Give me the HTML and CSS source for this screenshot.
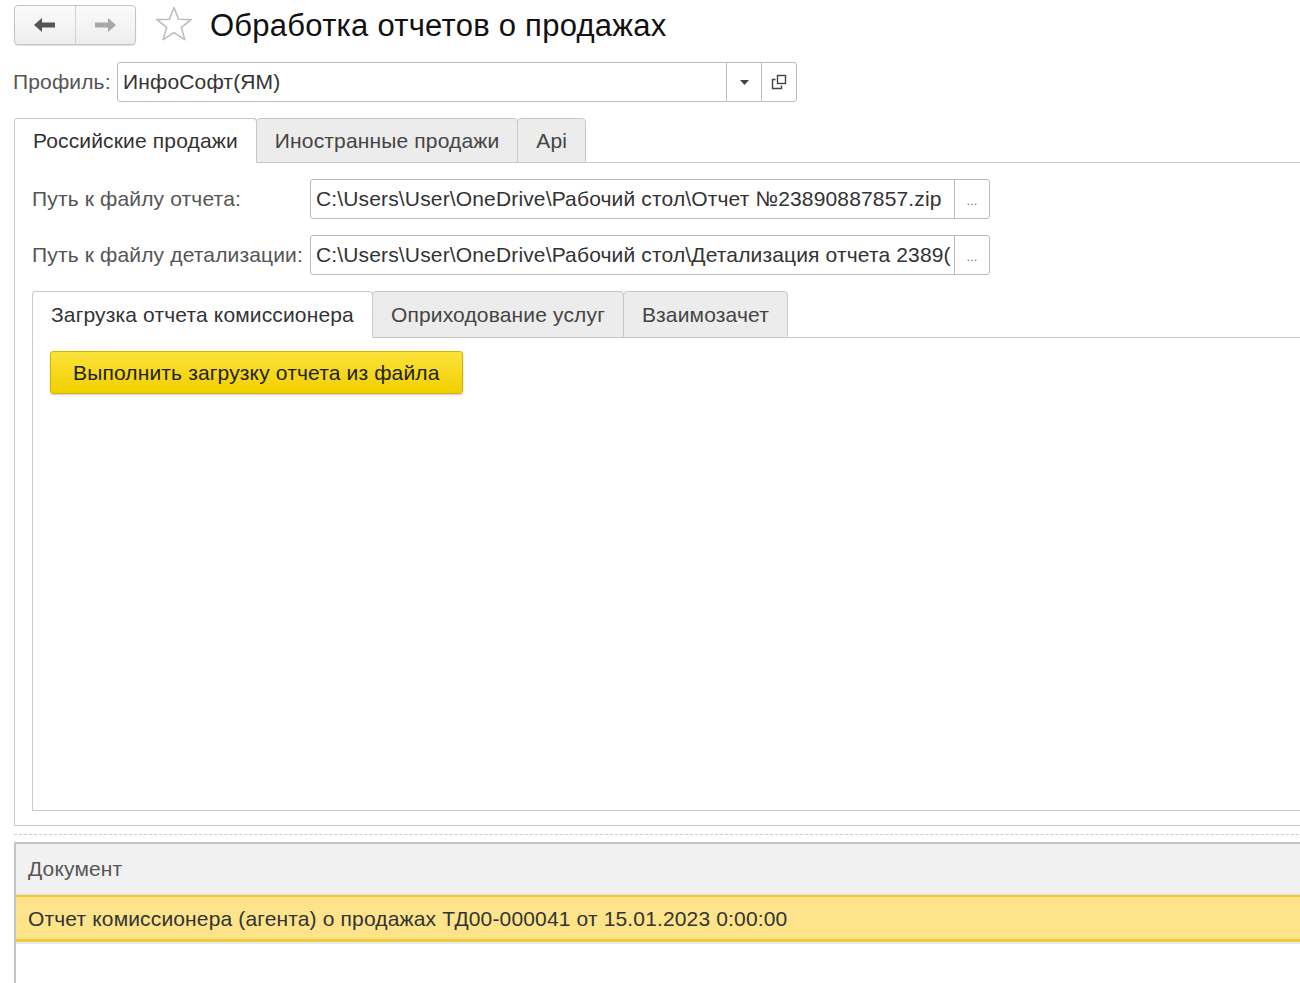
FILE: index.html
```html
<!DOCTYPE html>
<html lang="ru">
<head>
<meta charset="utf-8">
<title>Обработка отчетов о продажах</title>
<link rel="stylesheet" href="styles.css">
</head>
<body>
<div class="page">
  <div class="header">
    <div class="nav">
      <div class="nav-btn">
        <svg width="22" height="14" viewBox="0 0 22 14"><path d="M0 7 L8 0 L8 4.5 L21 4.5 L21 9.5 L8 9.5 L8 14 Z" fill="#555"/></svg>
      </div>
      <div class="nav-btn">
        <svg width="22" height="14" viewBox="0 0 22 14"><path d="M22 7 L14 0 L14 4.5 L1 4.5 L1 9.5 L14 9.5 L14 14 Z" fill="#a8a8a8"/></svg>
      </div>
    </div>
    <svg class="star" width="38" height="36" viewBox="0 0 38 36"><polygon points="19,1.5 23.6,13.3 36.2,13.6 26.3,21.4 29.8,33.6 19,26.6 8.2,33.6 11.7,21.4 1.8,13.6 14.4,13.3" fill="none" stroke="#bdbdbd" stroke-width="1.6" stroke-linejoin="round"/></svg>
    <h1 class="title">Обработка отчетов о продажах</h1>
  </div>

  <div class="profile-row">
    <span class="label profile-label">Профиль:</span>
    <div class="combo">
      <span class="combo-text">ИнфоСофт(ЯМ)</span>
      <span class="combo-btn"><svg width="9" height="5" viewBox="0 0 9 5"><polygon points="0,0 9,0 4.5,5" fill="#444"/></svg></span>
      <span class="combo-btn"><svg width="16" height="16" viewBox="0 0 16 16"><rect x="6.5" y="1.5" width="8" height="8" fill="none" stroke="#444" stroke-width="1.4"/><path d="M4.5 5.5 H1.5 V14.5 H10.5 V11.5" fill="none" stroke="#444" stroke-width="1.4"/></svg></span>
    </div>
  </div>

  <div class="tabs outer-tabs">
    <div class="tab active">Российские продажи</div>
    <div class="tab">Иностранные продажи</div>
    <div class="tab">Api</div>
    <div class="tab-fill"></div>
  </div>
  <div class="panel outer-panel">
    <div class="field-row">
      <span class="label field-label">Путь к файлу отчета:</span>
      <div class="path-input">
        <span class="path-text">C:\Users\User\OneDrive\Рабочий стол\Отчет №23890887857.zip</span>
        <span class="dots">...</span>
      </div>
    </div>
    <div class="field-row">
      <span class="label field-label">Путь к файлу детализации:</span>
      <div class="path-input">
        <span class="path-text">C:\Users\User\OneDrive\Рабочий стол\Детализация отчета 2389(</span>
        <span class="dots">...</span>
      </div>
    </div>

    <div class="tabs inner-tabs">
      <div class="tab active">Загрузка отчета комиссионера</div>
      <div class="tab">Оприходование услуг</div>
      <div class="tab">Взаимозачет</div>
      <div class="tab-fill"></div>
    </div>
    <div class="panel inner-panel">
      <button class="yellow-btn">Выполнить загрузку отчета из файла</button>
    </div>
  </div>

  <div class="splitter"></div>

  <div class="table">
    <div class="thead">Документ</div>
    <div class="row selected">Отчет комиссионера (агента) о продажах ТД00-000041 от 15.01.2023 0:00:00</div>
    <div class="table-rest"></div>
  </div>
</div>
</body>
</html>
```

FILE: styles.css
```css
html, body {
  margin: 0;
  padding: 0;
  background: #fff;
  overflow: hidden;
}
body {
  width: 1300px;
  height: 983px;
  font-family: "Liberation Sans", Arial, sans-serif;
  font-size: 21px;
  letter-spacing: 0.15px;
  color: #333;
}
.page {
  width: 1300px;
  height: 983px;
  overflow: hidden;
}

/* header */
.header {
  display: flex;
  align-items: center;
  height: 50px;
  padding-left: 14px;
}
.nav {
  display: flex;
  width: 120px;
  height: 38px;
  border: 1px solid #c4c4c4;
  border-radius: 4px;
  background: linear-gradient(#fbfbfb, #ededed);
  box-shadow: 0 1px 1px rgba(0,0,0,0.12);
}
.nav-btn {
  flex: 1;
  display: flex;
  align-items: center;
  justify-content: center;
}
.nav-btn + .nav-btn {
  border-left: 1px solid #d2d2d2;
}
.star {
  margin-left: 19px;
  margin-top: -2px;
}
.title {
  margin: 0 0 0 17px;
  font-size: 31px;
  letter-spacing: 0.25px;
  font-weight: normal;
  color: #111;
  line-height: 1;
}

/* profile */
.profile-row {
  display: flex;
  align-items: center;
  margin-top: 12px;
  padding-left: 13px;
}
.label {
  color: #555;
}
.profile-label {
  width: 104px;
  flex: none;
}
.combo {
  display: flex;
  width: 678px;
  height: 38px;
  border: 1px solid #bcbcbc;
  border-radius: 3px;
  background: #fff;
}
.combo-text {
  flex: 1;
  display: flex;
  align-items: center;
  padding-left: 5px;
  color: #333;
}
.combo-btn {
  width: 34px;
  display: flex;
  align-items: center;
  justify-content: center;
  border-left: 1px solid #bcbcbc;
}

/* tabs */
.tabs {
  display: flex;
  height: 45px;
}
.outer-tabs {
  margin-top: 16px;
  margin-left: 14px;
}
.tab {
  display: flex;
  align-items: center;
  padding: 0 18px;
  background: #ececec;
  border: 1px solid #c8c8c8;
  border-radius: 4px 4px 0 0;
  color: #444;
  white-space: nowrap;
  margin-left: -1px;
}
.tab:first-child {
  margin-left: 0;
}
.tab.active {
  background: #fff;
  border-bottom-color: #fff;
  color: #333;
  z-index: 1;
}
.tab-fill {
  flex: 1;
  border-bottom: 1px solid #c8c8c8;
}

.panel {
  border-left: 1px solid #c8c8c8;
  border-bottom: 1px solid #c8c8c8;
  margin-top: -1px;
}
.outer-panel {
  margin-left: 14px;
  width: 1400px;
  height: 664px;
  padding: 17px 0 0 17px;
  box-sizing: border-box;
}

.field-row {
  display: flex;
  align-items: center;
  margin-bottom: 16px;
}
.field-label {
  width: 278px;
  flex: none;
}
.path-input {
  display: flex;
  width: 678px;
  height: 38px;
  border: 1px solid #bcbcbc;
  border-radius: 3px;
}
.path-text {
  flex: 1;
  overflow: hidden;
  white-space: nowrap;
  padding-left: 5px;
  line-height: 38px;
  color: #333;
}
.dots {
  width: 34px;
  flex: none;
  border-left: 1px solid #bcbcbc;
  text-align: center;
  font-size: 13px;
  letter-spacing: 0;
  line-height: 42px;
  color: #777;
}

.inner-tabs {
  margin-left: 0;
  margin-top: 0;
  height: 47px;
}
.inner-panel {
  width: 1400px;
  height: 474px;
  padding: 14px 0 0 17px;
  box-sizing: border-box;
}

.yellow-btn {
  display: block;
  height: 43px;
  padding: 0 22px;
  font-family: "Liberation Sans", Arial, sans-serif;
  font-size: 21px;
  letter-spacing: 0.15px;
  color: #222;
  background: linear-gradient(#fbe33a, #f1cf00);
  border: 1px solid #d4b400;
  border-radius: 3px;
  box-shadow: 0 1px 2px rgba(0,0,0,0.2);
}

/* splitter */
.splitter {
  height: 0;
  margin: 8px 0 0 14px;
  border-top: 1px dashed #cccccc;
  width: 1400px;
}

/* table */
.table {
  margin: 7px 0 0 14px;
  width: 1400px;
  border-top: 2px solid #c4c4c4;
  border-left: 2px solid #c4c4c4;
  height: 200px;
}
.thead {
  height: 50px;
  line-height: 50px;
  background: #f1f1f1;
  padding-left: 12px;
  color: #555;
  border-bottom: 1px solid #dfe4ea;
}
.row.selected {
  height: 42px;
  line-height: 44px;
  background: #fde48b;
  border-top: 2px solid #f5c932;
  border-bottom: 3px solid #f5c932;
  padding-left: 12px;
  color: #333;
}
.table-rest {
  border-top: 2px solid #e4eaf2;
}
```
